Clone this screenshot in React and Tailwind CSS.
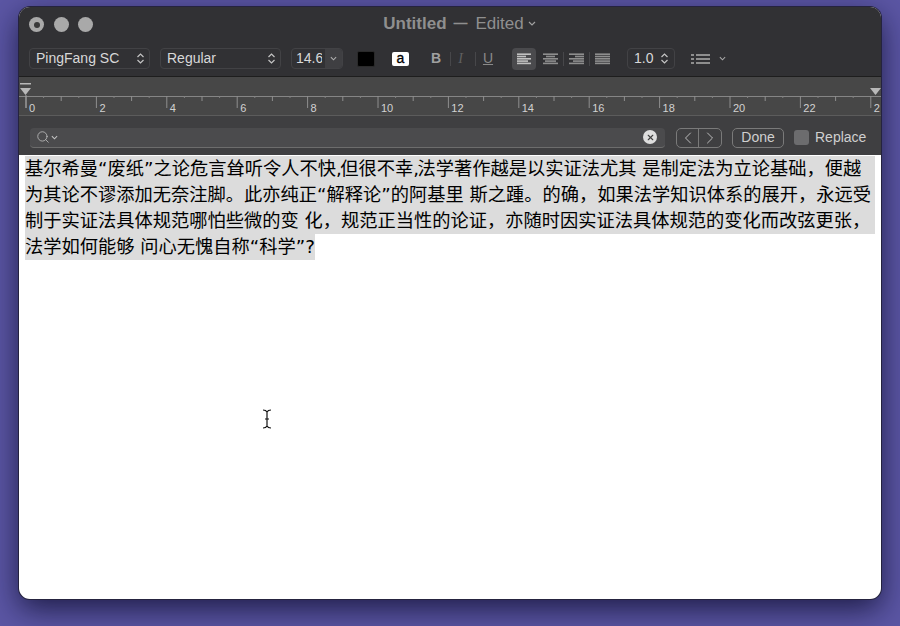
import React from "react";
import { ChevronLeft, ChevronRight, X, Search } from "lucide-react";

const F = { fontFamily: '"Liberation Sans", Arial, sans-serif' };

function Stepper() {
  return (
    <svg width="9" height="13" viewBox="0 0 9 13" fill="none" stroke="#c4c4c4" strokeWidth="1.2" className="shrink-0">
      <path d="M1.5 5 L4.5 2 L7.5 5" />
      <path d="M1.5 8 L4.5 11 L7.5 8" />
    </svg>
  );
}

function Chev({ c = "#b0b0b0", w = 8 }) {
  return (
    <svg width={w} height="5" viewBox="0 0 8 5" fill="none" stroke={c} strokeWidth="1.2">
      <path d="M1 1 L4 4 L7 1" />
    </svg>
  );
}

function AlignIcon({ rows, color = "#8e8e8e" }) {
  return (
    <svg width="15" height="12" viewBox="0 0 15 12" fill={color}>
      {rows.map(([x, w], i) => (
        <rect key={i} x={x} y={i * 2.3 + 0.4} width={w} height="1.6" />
      ))}
    </svg>
  );
}

function Ruler() {
  const ticks = [];
  const unit = 35.2;
  for (let i = 0; i <= 24; i++) {
    const x = i * unit + 7;
    ticks.push(
      <line key={"m" + i} x1={x} x2={x} y1="19" y2={i % 2 === 0 ? 31 : 24} stroke="#8f8f8f" strokeWidth="1" />
    );
    ticks.push(<line key={"s" + i} x1={x + unit / 2} x2={x + unit / 2} y1="19" y2="21" stroke="#808080" strokeWidth="1" />);
  }
  return (
    <div className="relative h-[39px] border-b border-[#5c5c5c] bg-[#474747]">
      <svg className="absolute left-0 top-0" width="862" height="39">
        <line x1="0" x2="862" y1="19.5" y2="19.5" stroke="#858585" strokeWidth="1" />
        {ticks}
        <rect x="1" y="6" width="11" height="1.5" fill="#b8b8b8" />
        <path d="M1 11 H12 L6.5 18 Z" fill="#b8b8b8" />
        <line x1="7" x2="7" y1="18" y2="31" stroke="#a0a0a0" />
        <path d="M851 11 H862 L856.5 18 Z" fill="#b8b8b8" />
      </svg>
      <div className="absolute left-[10px] top-[24px] flex text-[11px] leading-[14px] text-[#d2d2d2]" style={F}>
        {[0, 2, 4, 6, 8, 10, 12, 14, 16, 18, 20, 22, 2].map((n, i) => (
          <span key={i} className="w-[70.4px] shrink-0">{n}</span>
        ))}
      </div>
    </div>
  );
}

const lines = [
  <>
    基尔希曼“废纸”之论危言耸听令人不快<span className="tracking-[-1.5px]">,</span>但很不幸<span className="tracking-[-1.5px]">,</span>法学著作越是以实证法尤其 是制定法为立论基础，便越
  </>,
  "为其论不谬添加无奈注脚。此亦纯正“解释论”的阿基里 斯之踵。的确，如果法学知识体系的展开，永远受",
  "制于实证法具体规范哪怕些微的变 化，规范正当性的论证，亦随时因实证法具体规范的变化而改弦更张，",
  "法学如何能够 问心无愧自称“科学”?",
];

export default function App() {
  return (
    <div className="flex h-[626px] w-[900px] items-start justify-center overflow-hidden bg-[#5b56a4] pt-[7px]" style={F}>
      <div className="h-[592px] w-[862px] overflow-hidden rounded-[11px] bg-white shadow-[0_0_0_1px_#25233f,0_10px_30px_rgba(10,10,40,0.75)]">
        {/* title and toolbar */}
        <div className="flex h-[70px] flex-col border-b border-[#1e1e1e] bg-[#313134]">
          <div className="relative flex h-[34px] items-center justify-center">
            <div className="absolute left-[10px] top-[10px] flex gap-[9.5px]">
              <span className="flex h-[15px] w-[15px] items-center justify-center rounded-full bg-[#a9a9a9]">
                <span className="h-[6px] w-[6px] rounded-full bg-[#3a3a3a]" />
              </span>
              <span className="h-[15px] w-[15px] rounded-full bg-[#a9a9a9]" />
              <span className="h-[15px] w-[15px] rounded-full bg-[#a9a9a9]" />
            </div>
            <div className="ml-[20px] flex items-center text-[17px] text-[#8f8f8f]">
              <span className="font-bold">Untitled</span>
              <span className="ml-[7px] text-[14px] font-bold">—</span>
              <span className="ml-[8px]">Edited</span>
              <span className="ml-[3px]"><Chev c="#a0a0a0" w={10} /></span>
            </div>
          </div>
          <div className="flex h-[36px] items-center pl-[10px] pt-[1px] text-[14px] text-[#d8d8d8]">
            <div className="flex h-[21px] w-[121px] items-center justify-between rounded-[4px] border border-[#424245] pl-[6px] pr-[4px]">
              <span>PingFang SC</span>
              <Stepper />
            </div>
            <div className="ml-[10px] flex h-[21px] w-[121px] items-center justify-between rounded-[4px] border border-[#424245] pl-[6px] pr-[4px]">
              <span>Regular</span>
              <Stepper />
            </div>
            <div className="ml-[10px] flex h-[21px] w-[52px] items-center justify-between overflow-hidden rounded-[4px] border border-[#424245] pl-[4px]">
              <span className="w-[26px] overflow-hidden">14.6</span>
              <span className="flex h-full w-[17px] items-center justify-center bg-[#3f3f42]"><Chev w={7} /></span>
            </div>
            <span className="ml-[14px] h-[16px] w-[18px] rounded-[2px] border border-[#2a2a2a] bg-black" />
            <span className="ml-[17px] flex h-[14px] w-[17px] items-center justify-center rounded-[2px] bg-white text-[14px] text-black [-webkit-text-stroke:0.3px_black]">a</span>
            <span className="ml-[19px] w-[16px] text-center text-[14px] font-bold text-[#a0a0a0]">B</span>
            <span className="ml-[6px] h-[14px] w-px bg-[#47474a]" />
            <span className="ml-[1px] w-[17px] text-center text-[14px] italic text-[#606060]" style={{ fontFamily: '"Liberation Serif", serif' }}>I</span>
            <span className="ml-[6px] h-[14px] w-px bg-[#47474a]" />
            <span className="ml-[2px] w-[20px] text-center text-[14px] text-[#8a8a8a] underline">U</span>
            <span className="ml-[14px] flex h-[22px] w-[24px] items-center justify-center rounded-[4px] bg-[#4a4a4d]">
              <AlignIcon rows={[[0, 14], [0, 9], [0, 14], [0, 11], [0, 14]]} color="#c0c0c0" />
            </span>
            <span className="ml-[7px] flex w-[15px] justify-center">
              <AlignIcon rows={[[0, 15], [3, 9], [0, 15], [2, 11], [0, 15]]} />
            </span>
            <span className="ml-[5px] h-[14px] w-px bg-[#47474a]" />
            <span className="ml-[5px] flex w-[15px] justify-center">
              <AlignIcon rows={[[0, 15], [6, 9], [0, 15], [4, 11], [0, 15]]} />
            </span>
            <span className="ml-[5px] h-[14px] w-px bg-[#47474a]" />
            <span className="ml-[5px] flex w-[15px] justify-center">
              <AlignIcon rows={[[0, 15], [0, 15], [0, 15], [0, 15], [0, 15]]} />
            </span>
            <div className="ml-[17px] flex h-[21px] w-[48px] items-center justify-between rounded-[4px] border border-[#424245] pl-[6px] pr-[5px]">
              <span>1.0</span>
              <Stepper />
            </div>
            <svg className="ml-[16px]" width="19" height="12" viewBox="0 0 19 12" fill="#8e8e8e">
              {[1, 5, 9].map((y) => (
                <g key={y}>
                  <rect x="0" y={y} width="3" height="2" />
                  <rect x="5" y={y} width="14" height="2" />
                </g>
              ))}
            </svg>
            <span className="ml-[9px]"><Chev c="#a8a8a8" w={7} /></span>
          </div>
        </div>
        <Ruler />
        {/* find bar */}
        <div className="flex h-[39px] items-center bg-[#3f3f41] pl-[11px] pt-[4px] text-[14px] text-[#cfcfcf]">
          <div className="flex h-[20px] w-[635px] items-center justify-between rounded-[4px] border-b border-[#6d6d6d] bg-[#4b4b4d] pl-[6px] pr-[8px]">
            <span className="flex items-center gap-[1px]">
              <Search size={14} strokeWidth={1.3} color="#c8c8c8" />
              <Chev c="#c4c4c4" w={7} />
            </span>
            <span className="flex h-[14px] w-[14px] items-center justify-center rounded-full bg-[#dedede]">
              <X size={9} strokeWidth={3} color="#404040" />
            </span>
          </div>
          <div className="ml-[11px] flex h-[20px] w-[46px] rounded-[5px] border border-[#7a7a7a]">
            <span className="flex w-[22px] items-center justify-center border-r border-[#7a7a7a]">
              <ChevronLeft size={20} strokeWidth={1} color="#d4d4d4" />
            </span>
            <span className="flex flex-1 items-center justify-center">
              <ChevronRight size={20} strokeWidth={1} color="#d4d4d4" />
            </span>
          </div>
          <div className="ml-[10px] flex h-[20px] w-[52px] items-center justify-center rounded-[5px] border border-[#7a7a7a]">Done</div>
          <span className="ml-[10px] h-[15px] w-[15px] rounded-[3px] bg-[#6c6c6e]" />
          <span className="ml-[6px]">Replace</span>
        </div>
        {/* document */}
        <div className="pl-[6px] pt-[1px] text-[18.26px] text-black" style={{ fontFamily: '"DejaVu Sans", "Noto Sans CJK SC", sans-serif' }}>
          {lines.map((l, i) => (
            <div key={i} className="h-[26px] whitespace-nowrap leading-[26px]">
              <span className={i < 3 ? "block w-[850px] bg-[#dcdcdc]" : "inline-block bg-[#dcdcdc]"}>{l}</span>
            </div>
          ))}
        </div>
        {/* I-beam pointer over the page */}
        <svg className="absolute left-[261px] top-[408px]" width="12" height="22" viewBox="0 0 12 22" fill="none" stroke="#111" strokeWidth="1.2">
          <path d="M2 2 Q5 2 6 4 Q7 2 10 2 M6 4 V18 M2 20 Q5 20 6 18 Q7 20 10 20 M4 11 H8" />
        </svg>
      </div>
    </div>
  );
}
